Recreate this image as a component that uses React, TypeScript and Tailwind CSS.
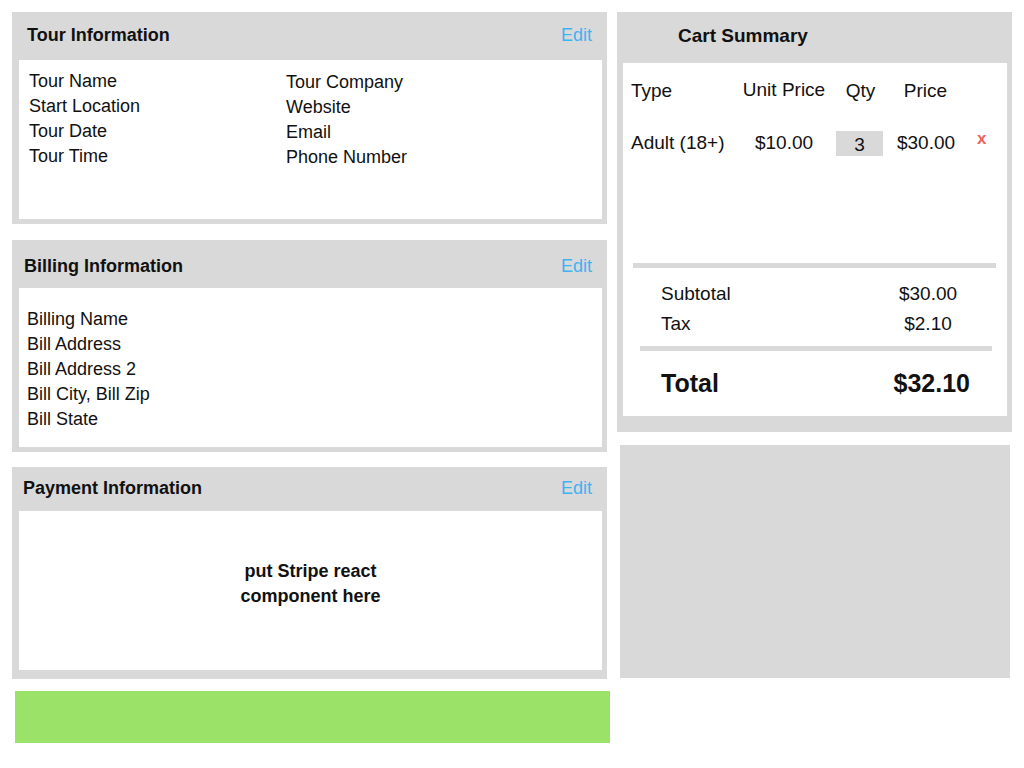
import React from "react";

function Panel({
  title,
  headerH,
  titlePl,
  children,
}: {
  title: string;
  headerH: string;
  titlePl: string;
  children: React.ReactNode;
}) {
  return (
    <div className="w-[595px] h-[212px] bg-[#d9d9d9] flex flex-col">
      <div className={`${headerH} ${titlePl} pr-[15px] flex items-center justify-between shrink-0`}>
        <span className="text-[18px] font-bold">{title}</span>
        <span className="text-[18px] text-[#3db4f2]">Edit</span>
      </div>
      <div className="ml-[7px] mr-[5px] h-[159px] bg-white">{children}</div>
    </div>
  );
}

export default function App() {
  return (
    <div className="w-[1024px] h-[768px] bg-white text-[#111] font-['Liberation_Sans',Arial,sans-serif] leading-[25px]">
      <div className="flex pt-3 pl-3 gap-[10px]">
        {/* Left column */}
        <div className="flex flex-col w-[598px]">
          <Panel title="Tour Information" headerH="h-[48px] pb-[2px]" titlePl="pl-[15px]">
            <div className="flex pt-[9px] pl-[10px] text-[18px]">
              <div className="w-[257px] flex flex-col">
                <span>Tour Name</span>
                <span>Start Location</span>
                <span>Tour Date</span>
                <span>Tour Time</span>
              </div>
              <div className="flex flex-col pt-[1px]">
                <span>Tour Company</span>
                <span>Website</span>
                <span>Email</span>
                <span>Phone Number</span>
              </div>
            </div>
          </Panel>
          <div className="h-[16px]" />
          <Panel title="Billing Information" headerH="h-[48px] pt-[4px]" titlePl="pl-[12px]">
            <div className="flex flex-col pt-[19px] pl-[8px] text-[18px]">
              <span>Billing Name</span>
              <span>Bill Address</span>
              <span>Bill Address 2</span>
              <span>Bill City, Bill Zip</span>
              <span>Bill State</span>
            </div>
          </Panel>
          <div className="h-[15px]" />
          <Panel title="Payment Information" headerH="h-[44px] pb-[2px]" titlePl="pl-[11px]">
            <div className="pt-[48px] text-center text-[18px] font-bold">
              put Stripe react
              <br />
              component here
            </div>
          </Panel>
          <div className="ml-[3px] mt-[12px] w-[595px] h-[52px] bg-[#9be268]" />
        </div>

        {/* Right column */}
        <div className="flex flex-col w-[395px] -ml-[3px]">
          <div className="h-[420px] bg-[#d9d9d9] flex flex-col">
            <div className="h-[51px] pl-[61px] pt-[11px] text-[19px] font-bold shrink-0">Cart Summary</div>
            <div className="ml-[6px] mr-[5px] h-[353px] bg-white flex flex-col text-[19px]">
              <div className="grid grid-cols-[109px_88px_63px_69px_1fr] pl-[8px] mt-[15px] h-[25px] items-center">
                <span>Type</span>
                <span className="text-center -mt-[2px]">Unit Price</span>
                <span className="text-center pl-[2px]">Qty</span>
                <span className="text-center">Price</span>
                <span />
              </div>
              <div className="grid grid-cols-[109px_88px_63px_69px_1fr] pl-[8px] mt-[25px] h-[27px] items-center">
                <span>Adult (18+)</span>
                <span className="text-center">$10.00</span>
                <div className="flex justify-center pt-[3px]">
                  <div className="w-[47px] h-[25px] bg-[#d9d9d9] flex items-center justify-center pt-[2px]">3</div>
                </div>
                <span className="text-center pl-[1px]">$30.00</span>
                <span className="pl-[17px] -mt-[8px] text-[#f0605c] font-bold text-[17px]">x</span>
              </div>
              <div className="ml-[10px] mr-[11px] mt-[108px] h-[5px] bg-[#d9d9d9]" />
              <div className="mt-[10px] flex items-center justify-between h-[30px] pl-[38px] pr-[29px]">
                <span>Subtotal</span>
                <span className="w-[100px] text-center">$30.00</span>
              </div>
              <div className="flex items-center justify-between h-[30px] pl-[38px] pr-[29px]">
                <span>Tax</span>
                <span className="w-[100px] text-center">$2.10</span>
              </div>
              <div className="ml-[17px] mr-[15px] mt-[8px] h-[5px] bg-[#d9d9d9]" />
              <div className="mt-[17px] flex items-center justify-between h-[30px] pl-[38px] pr-[37px] text-[25px] font-bold">
                <span>Total</span>
                <span>$32.10</span>
              </div>
            </div>
          </div>
          <div className="ml-[3px] mt-[13px] w-[390px] h-[233px] bg-[#d9d9d9]" />
        </div>
      </div>
    </div>
  );
}
